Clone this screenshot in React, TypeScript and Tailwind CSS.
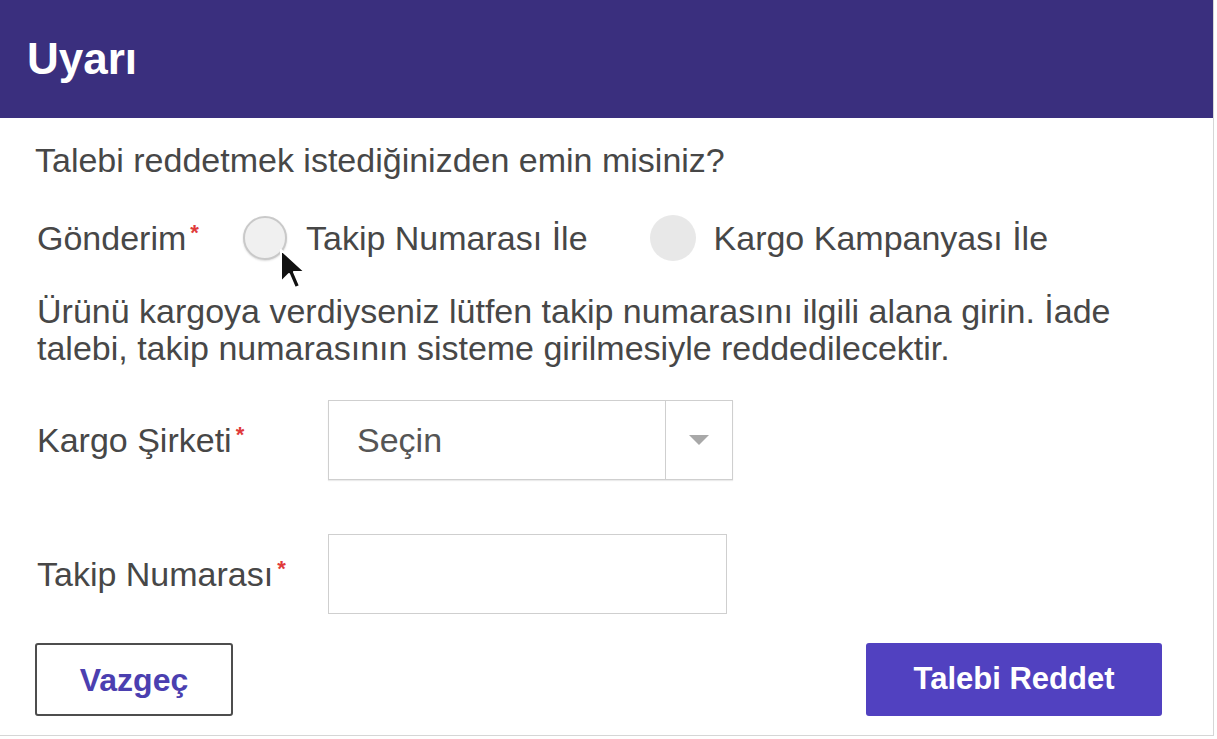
function Star() {
  return <span className="text-[#e03a3a] text-[22px] font-bold leading-none relative -top-[5px] ml-[4px]">*</span>
}

export default function App() {
  return (
    <div className="w-[1214px] h-[736px] bg-white border-r border-b border-[#d6d6d6] font-['Liberation_Sans',Arial,sans-serif] text-[#474747] relative">
      {/* Header */}
      <div className="h-[118px] bg-[#3a2f7e] flex items-center pl-[27px]">
        <h1 className="text-white font-bold text-[44px] leading-none">Uyarı</h1>
      </div>

      <div className="pl-[35px] pr-[40px] flex flex-col">
        <p className="text-[34px] leading-[40px] mt-[22px]">Talebi reddetmek istediğinizden emin misiniz?</p>

        {/* Gönderim */}
        <div className="flex items-center mt-[35px] h-[46px]">
          <span className="text-[34px] w-[208px] pl-[2px] flex items-center">Gönderim<Star /></span>
          <label className="flex items-center mr-[62px]">
            <span className="w-[44px] h-[44px] rounded-full border-2 border-[#c9c9c9] bg-[#f0f0f0] shadow-[0_1px_2px_rgba(0,0,0,0.15)]" />
            <span className="text-[34px] ml-[19px]">Takip Numarası İle</span>
          </label>
          <label className="flex items-center">
            <span className="w-[46px] h-[46px] rounded-full bg-[#e8e8e8]" />
            <span className="text-[34px] ml-[18px]">Kargo Kampanyası İle</span>
          </label>
        </div>

        <p className="text-[34px] leading-[37px] mt-[32px] pl-[2px]">
          Ürünü kargoya verdiyseniz lütfen takip numarasını ilgili alana girin. İade talebi, takip numarasının sisteme girilmesiyle reddedilecektir.
        </p>

        {/* Kargo Şirketi */}
        <div className="flex items-center mt-[33px]">
          <span className="text-[34px] w-[293px] pl-[2px] flex items-center">Kargo Şirketi<Star /></span>
          <div className="w-[405px] h-[80px] border border-[#cfcfcf] flex shadow-[0_1px_1px_rgba(0,0,0,0.08)]">
            <div className="flex-1 flex items-center pl-[28px] text-[34px] text-[#555]">Seçin</div>
            <div className="w-[67px] border-l border-[#cfcfcf] flex items-center justify-center">
              <svg width="22" height="12" viewBox="0 0 22 12"><path d="M1 1h20l-10 10z" fill="#a8a8a8" /></svg>
            </div>
          </div>
        </div>

        {/* Takip Numarası */}
        <div className="flex items-center mt-[54px]">
          <span className="text-[34px] w-[293px] pl-[2px] flex items-center">Takip Numarası<Star /></span>
          <input className="w-[399px] h-[80px] border border-[#cfcfcf] outline-none" />
        </div>

        {/* Buttons */}
        <div className="flex justify-between items-center mt-[29px] pr-[11px]">
          <button className="w-[198px] h-[73px] border-2 border-[#4d4d4d] rounded-[3px] text-[#4b3fb0] font-bold text-[32px]">Vazgeç</button>
          <button className="w-[296px] h-[73px] bg-[#5141c0] rounded-[3px] text-white font-bold text-[31px]">Talebi Reddet</button>
        </div>
      </div>

      {/* mouse cursor */}
      <svg className="absolute left-[279px] top-[248px]" width="28" height="44" viewBox="0 0 28 44">
        <path d="M2 2v32l8-8 6 14 5-2-6-14h11z" fill="#111" stroke="#fff" strokeWidth="2" strokeLinejoin="round" />
      </svg>
    </div>
  )
}
